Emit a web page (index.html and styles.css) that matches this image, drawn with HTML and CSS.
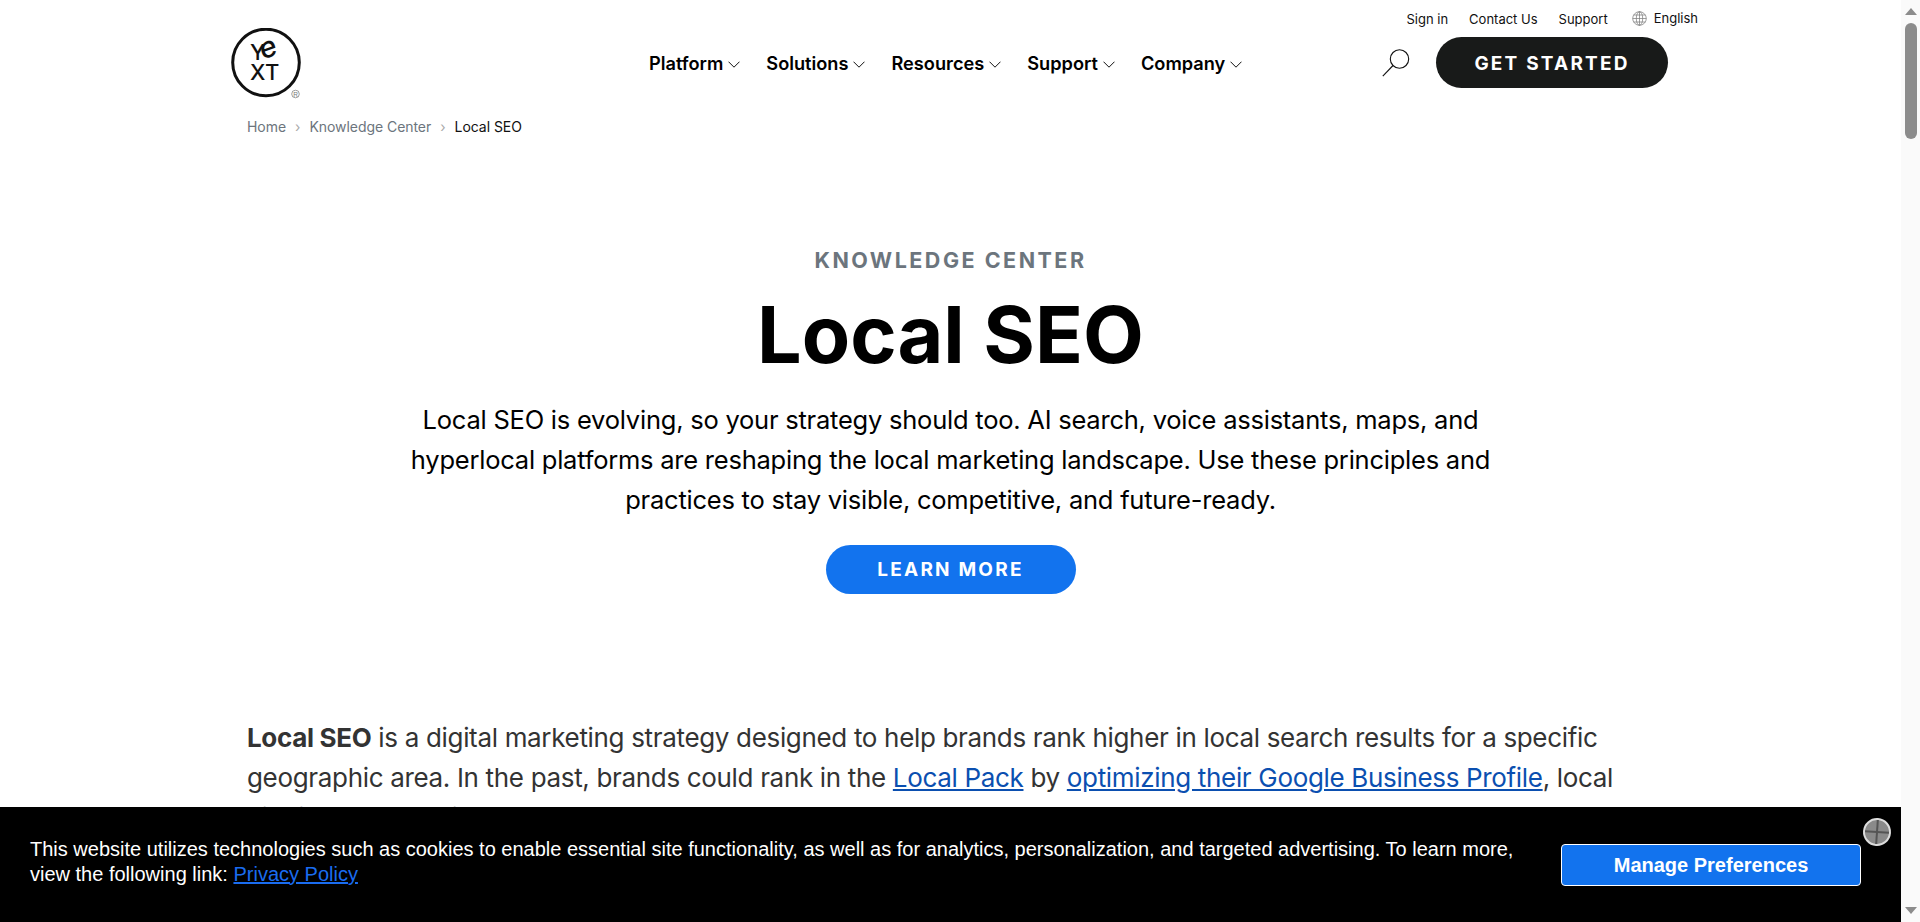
FILE: index.html
```html
<!DOCTYPE html>
<html lang="en">
<head>
<meta charset="utf-8">
<title>Local SEO | Yext</title>
<link rel="stylesheet" href="styles.css">
</head>
<body>
<div class="page">
  <header class="site-header">
    <a class="logo" href="#">
      <svg width="76" height="72" viewBox="0 0 76 72">
        <circle cx="35" cy="34.5" r="33.3" fill="none" stroke="#111" stroke-width="3"/>
        <text class="logo-t" x="19" y="32">Y</text>
        <text class="logo-e" transform="translate(31 32) rotate(-20) skewX(-8)">e</text>
        <text class="logo-t" x="19" y="52">X</text>
        <text class="logo-t" x="34" y="52">T</text>
        <circle cx="64.5" cy="66" r="3.8" fill="none" stroke="#777" stroke-width=".7"/>
        <text class="logo-r" x="64.5" y="68.5" text-anchor="middle">R</text>
      </svg>
    </a>
    <div class="header-right">
      <div class="util-row">
        <a href="#">Sign in</a>
        <a href="#">Contact Us</a>
        <a href="#">Support</a>
        <a class="lang" href="#">
          <svg width="15" height="15" viewBox="0 0 15 15" fill="none" stroke="#777" stroke-width=".7">
            <circle cx="7.5" cy="7.5" r="6.8"/><ellipse cx="7.5" cy="7.5" rx="3.2" ry="6.8"/>
            <path d="M7.5.7v13.6M.7 7.5h13.6M1.6 4h11.8M1.6 11h11.8"/>
          </svg>
          <span class="lang-label">English</span>
        </a>
      </div>
      <div class="main-row">
        <nav class="nav">
          <a href="#">Platform<svg class="chev" width="12" height="7" viewBox="0 0 12 7"><path d="M.5.7 6 6.2 11.5.7" fill="none" stroke="#111" stroke-width="1"/></svg></a>
          <a href="#">Solutions<svg class="chev" width="12" height="7" viewBox="0 0 12 7"><path d="M.5.7 6 6.2 11.5.7" fill="none" stroke="#111" stroke-width="1"/></svg></a>
          <a href="#">Resources<svg class="chev" width="12" height="7" viewBox="0 0 12 7"><path d="M.5.7 6 6.2 11.5.7" fill="none" stroke="#111" stroke-width="1"/></svg></a>
          <a href="#">Support<svg class="chev" width="12" height="7" viewBox="0 0 12 7"><path d="M.5.7 6 6.2 11.5.7" fill="none" stroke="#111" stroke-width="1"/></svg></a>
          <a href="#">Company<svg class="chev" width="12" height="7" viewBox="0 0 12 7"><path d="M.5.7 6 6.2 11.5.7" fill="none" stroke="#111" stroke-width="1"/></svg></a>
        </nav>
        <svg class="search" width="28" height="28" viewBox="0 0 28 28" fill="none" stroke="#111" stroke-width="1.1">
          <circle cx="17.5" cy="10" r="9.2"/><path d="M11 16.5.8 27.2"/>
        </svg>
        <a class="btn-start" href="#">GET STARTED</a>
      </div>
    </div>
  </header>
  <div class="crumbs">
    <a href="#">Home</a><span class="sep">›</span><a href="#">Knowledge Center</a><span class="sep">›</span><span class="cur">Local SEO</span>
  </div>
  <section class="hero">
    <div class="eyebrow">KNOWLEDGE CENTER</div>
    <h1>Local SEO</h1>
    <p>Local SEO is evolving, so your strategy should too. AI search, voice assistants, maps, and hyperlocal platforms are reshaping the local marketing landscape. Use these principles and practices to stay visible, competitive, and future-ready.</p>
    <a class="btn-learn" href="#">LEARN MORE</a>
  </section>
  <section class="body-copy">
    <p><strong>Local SEO</strong> is a digital marketing strategy designed to help brands rank higher in local search results for a specific geographic area. In the past, brands could rank in the <a href="#">Local Pack</a> by <a href="#">optimizing their Google Business Profile</a>, local citations, and reviews.</p>
  </section>
</div>
<aside class="cookie">
  <p>This website utilizes technologies such as cookies to enable essential site functionality, as well as for analytics, personalization, and targeted advertising. To learn more, view the following link: <a href="#">Privacy Policy</a></p>
  <button class="btn-pref">Manage Preferences</button>
  <span class="close" aria-label="Close"></span>
</aside>
<div class="scrollbar">
  <span class="arrow-up"></span>
  <span class="thumb"></span>
  <span class="arrow-down"></span>
</div>
</body>
</html>
```
FILE: styles.css
```css
* { box-sizing: border-box; }
html, body { margin: 0; height: 100%; overflow: hidden; background: #fff; }
body { font-family: Inter, "Noto Sans", sans-serif; color: #000; }
a { color: inherit; text-decoration: none; }
.page { width: 1901px; height: 922px; overflow: hidden; }

.site-header { display: flex; padding: 28px 233px 0 231px; height: 116px; }
.logo { display: block; width: 76px; height: 72px; flex: none; }
.logo-t { font-family: Inter, sans-serif; font-size: 22px; font-weight: 500; fill: #111; }
.logo-e { font-family: Inter, sans-serif; font-size: 29px; font-weight: 500; fill: #111; }
.logo-r { font-family: "Liberation Sans", sans-serif; font-size: 6.5px; fill: #777; }
.header-right { flex: 1; margin-top: -28px; }
.util-row { display: flex; justify-content: flex-end; align-items: center; gap: 21px; height: 37px; margin-right: -30px; font-size: 13px; color: #111; }
.lang { display: flex; align-items: center; gap: 7px; margin-left: 3px; }
.lang-label { position: relative; top: -1px; }
.main-row { display: flex; align-items: center; height: 51px; padding-left: 342px; }
.nav { display: flex; gap: 26px; font-size: 18.2px; font-weight: 600; }
.nav a { display: flex; align-items: center; gap: 5px; }
.chev { margin-top: 3px; }
.search { margin-left: auto; margin-right: 26px; margin-top: 1px; }
.btn-start { display: flex; align-items: center; justify-content: center; width: 232px; height: 51px; padding-top: 1px; border-radius: 26px; background: #181a19; color: #fff; font-size: 19px; font-weight: 700; letter-spacing: 2.2px; }

.crumbs { display: flex; align-items: center; height: 20px; margin-left: 247px; font-size: 14px; letter-spacing: -.05px; color: #6c757d; }
.sep { margin: 0 9px; color: #aaa; }
.cur { color: #111; }

.hero { display: flex; flex-direction: column; align-items: center; margin-top: 111px; text-align: center; }
.eyebrow { font-size: 21.5px; line-height: 26px; font-weight: 700; letter-spacing: 2.5px; color: #6c757d; }
.hero h1 { margin: 15px 0 0; font-size: 79px; line-height: 92px; font-weight: 700; }
.hero p { width: 1120px; margin: 20px 0 0; font-size: 25.5px; letter-spacing: -.23px; line-height: 40px; }
.btn-learn { display: flex; align-items: center; justify-content: center; width: 250px; height: 49px; margin-top: 25px; border-radius: 25px; background: #1273ee; color: #fff; font-size: 19px; font-weight: 700; letter-spacing: 2.2px; }

.body-copy { margin: 124px 247px 0; color: #333; }
.body-copy p { margin: 0; font-size: 26px; letter-spacing: -.33px; line-height: 40px; }
.body-copy a { color: #0b4fb0; text-decoration: underline; }

.cookie { position: fixed; left: 0; top: 807px; width: 1901px; height: 115px; background: #000; color: #fff; font-family: "Liberation Sans", sans-serif; }
.cookie p { position: absolute; left: 30px; top: 30px; width: 1500px; margin: 0; font-size: 20px; line-height: 25px; }
.cookie p a { color: #1a6cf0; text-decoration: underline; }
.btn-pref { position: absolute; left: 1561px; top: 37px; width: 300px; height: 42px; border: 1px solid #fff; border-radius: 4px; background: #1273ee; color: #fff; font-family: inherit; font-size: 20px; font-weight: 700; }
.close { position: absolute; left: 1863px; top: 11px; width: 28px; height: 28px; border: 2px solid #ddd; border-radius: 50%; background: #8a8a8a; transform: rotate(4deg); }
.close::before, .close::after { content: ""; position: absolute; background: #555; }
.close::before { left: 11px; top: 0; width: 2px; height: 24px; }
.close::after { left: 0; top: 11px; width: 24px; height: 2px; }

.scrollbar { position: fixed; right: 0; top: 0; width: 19px; height: 922px; background: #fafafa; }
.thumb { position: absolute; left: 4px; top: 23px; width: 12px; height: 116px; border-radius: 6px; background: #8c8c8c; }
.arrow-up, .arrow-down { position: absolute; left: 4px; width: 0; height: 0; border-left: 6px solid transparent; border-right: 6px solid transparent; }
.arrow-up { top: 8px; border-bottom: 7px solid #8c8c8c; }
.arrow-down { bottom: 8px; border-top: 7px solid #8c8c8c; }
```
